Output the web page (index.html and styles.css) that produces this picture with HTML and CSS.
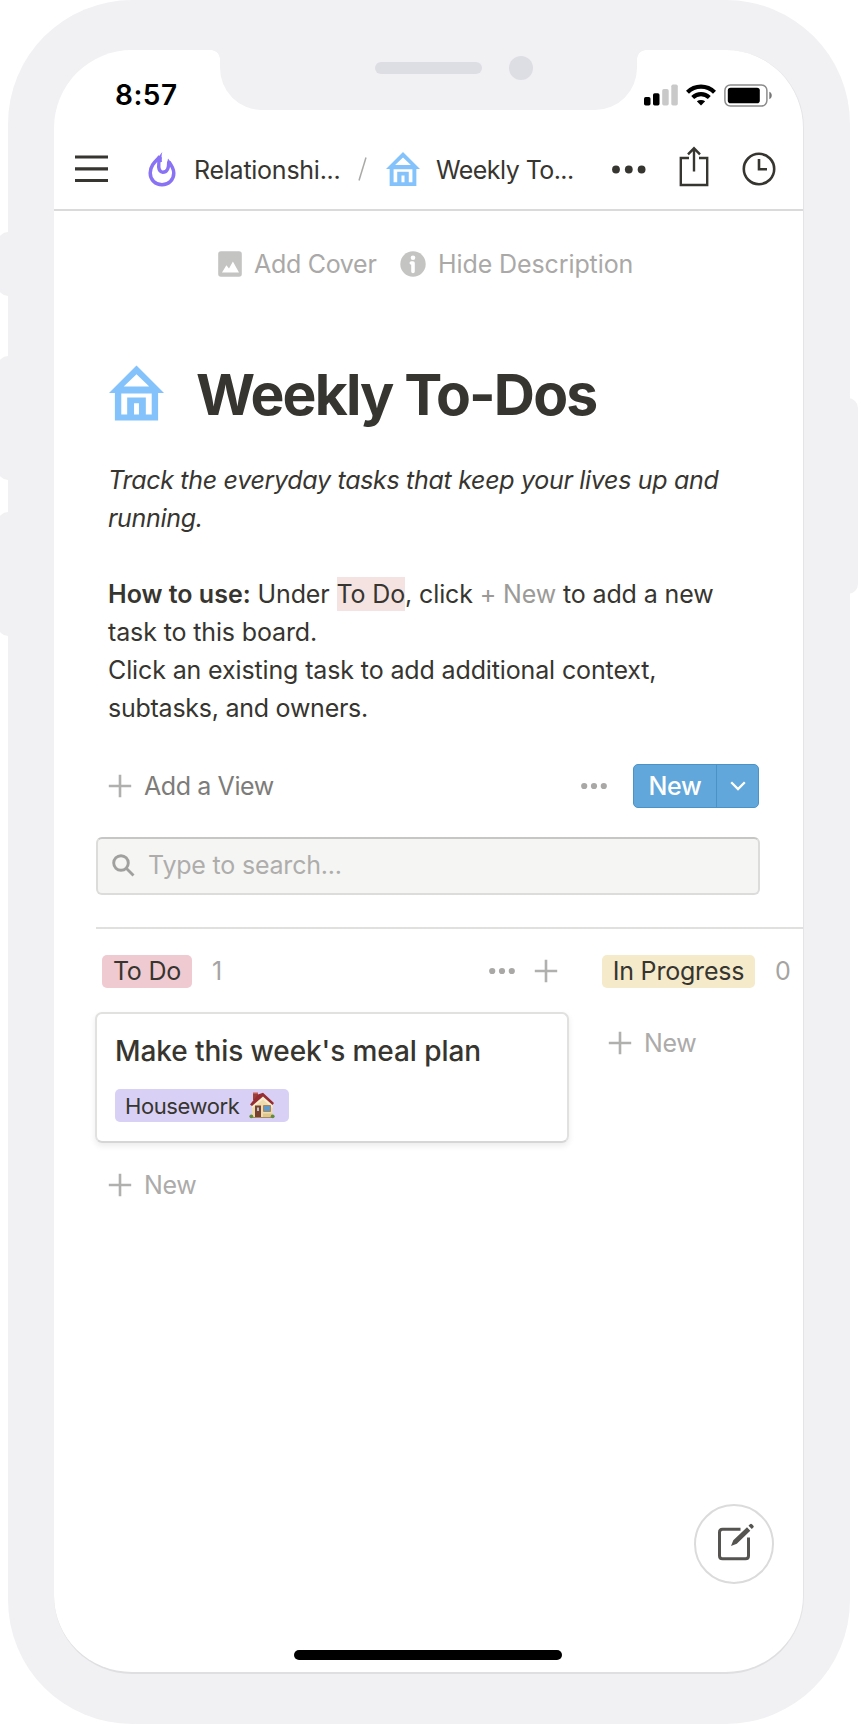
FILE: index.html
```html
<!DOCTYPE html>
<html lang="en">
<head>
<meta charset="utf-8">
<title>Weekly To-Dos</title>
<link rel="stylesheet" href="styles.css">
</head>
<body>
<svg class="defs" width="0" height="0" aria-hidden="true">
  <symbol id="house" viewBox="0 0 56 56">
    <path fill-rule="evenodd" d="M28 0 56 28H50V56H6V28H0ZM28 9 15 21.500H41ZM12.500 28.500V50H18.500V32.500H37.500V50H43.500V28.500ZM25.500 38.500V50H30.500V38.500Z"/>
  </symbol>
  <symbol id="plus" viewBox="0 0 24 24">
    <path d="M12 .8V23.200M.8 12H23.200" fill="none" stroke="currentColor" stroke-width="2.600"/>
  </symbol>
  <symbol id="dots" viewBox="0 0 26 8">
    <g fill="currentColor"><circle cx="3.200" cy="4" r="3.100"/><circle cx="13" cy="4" r="3.100"/><circle cx="22.800" cy="4" r="3.100"/></g>
  </symbol>
</svg>
<div class="phone">
  <i class="key key-mute"></i><i class="key key-up"></i><i class="key key-down"></i><i class="key key-power"></i>
  <main class="screen">
    <header class="status">
      <span class="time">8:57</span>
      <div class="signals">
        <svg width="34" height="22" viewBox="0 0 34 22"><rect x="0" y="13" width="6.500" height="8.500" rx="1.700"/><rect x="9" y="9.300" width="6.500" height="12.200" rx="1.700"/><g fill="#c9c9c9"><rect x="18.200" y="5" width="6.500" height="16.500" rx="1.700"/><rect x="27.300" y="0.500" width="6.500" height="21" rx="1.700"/></g></svg>
        <svg class="wifi" width="30" height="22" viewBox="0 0 30 22"><g fill="none" stroke="#000" stroke-width="4.200"><path d="M1.500 8.300C9 .7 21 .7 28.500 8.300"/><path d="M6.700 13.600C11.500 9 18.500 9 23.300 13.600"/></g><path d="M10.800 17.300C13.500 15.400 16.500 15.400 19.200 17.300L15 21.600Z"/></svg>
        <svg width="49" height="23" viewBox="0 0 49 23"><rect x=".9" y=".9" width="42" height="21.200" rx="5.500" fill="none" stroke="#8b8b8b" stroke-width="1.500"/><rect x="3.800" y="3.800" width="32" height="15.400" rx="2.800"/><path d="M45.300 7.800C48.600 9 48.600 14 45.300 15.200Z" fill="#777"/></svg>
      </div>
    </header>
    <nav class="nav">
      <svg class="menu" width="33" height="28" viewBox="0 0 33 28"><path d="M0 2H33M0 13.800H33M0 25.500H33" stroke="#373530" stroke-width="3.200"/></svg>
      <svg class="flame" width="28" height="35" viewBox="0 0 28 35"><g fill="none" stroke="#8a72f5" stroke-width="3.500"><path d="M12 4.500C8 8.800 2.200 13 2.200 21C2.200 28 7.500 32.700 14 32.700C20.500 32.700 25.800 28 25.800 21C25.800 16.500 23.500 13.300 21 10"/><path d="M12.300 5C9.800 12 9.800 20 14.800 20.200C19.800 20.200 20.800 16 20.800 9.500"/></g><path d="M14.300 0C13.200 3.500 13.500 6.500 14 10L8 9.500C9.500 6 12 3 14.300 0ZM20 6.500 23.500 11 21 13 19 12Z" fill="#8a72f5"/></svg>
      <span class="crumb crumb-parent">Relationshi...</span>
      <svg class="slash" width="9" height="24" viewBox="0 0 9 24"><path d="M8 .5 1 23.500" stroke="#aaa9a6" stroke-width="1.500"/></svg>
      <svg class="house" width="34" height="34"><use href="#house"/></svg>
      <span class="crumb crumb-page">Weekly To...</span>
      <svg class="more" width="34" height="9" viewBox="0 0 34 9"><g fill="#373530"><circle cx="4" cy="4.500" r="3.900"/><circle cx="16.800" cy="4.500" r="3.900"/><circle cx="29.600" cy="4.500" r="3.900"/></g></svg>
      <svg class="share" width="30" height="41" viewBox="0 0 30 41"><g fill="none" stroke="#373530" stroke-width="2.400"><path d="M10 12H1.800V39H28.200V12H20"/><path d="M15 25.500V2.200M9 8.300 15 2.300 21 8.300"/></g></svg>
      <svg class="clock" width="34" height="34" viewBox="0 0 34 34"><g fill="none" stroke="#373530" stroke-width="2.600"><circle cx="17" cy="17" r="15.200"/><path d="M17 7V17.300H25"/></g></svg>
    </nav>
    <div class="page-actions">
      <svg width="24" height="26" viewBox="0 0 24 26"><path fill="#c4c4c3" fill-rule="evenodd" d="M3 .3H21Q23.800 .3 23.800 3V23Q23.800 25.700 21 25.700H3Q.2 25.700 .2 23V3Q.2 .3 3 .3ZM4 21.500H21L14.900 10.500 11 17.500 8.400 14.200Z"/></svg>
      <span class="act-cover">Add Cover</span>
      <svg class="info" width="26" height="26" viewBox="0 0 26 26"><circle cx="13" cy="13" r="12.700" fill="#c4c4c3"/><circle cx="13" cy="6.700" r="2.300" fill="#fff"/><path d="M11.300 12H13V20.500" fill="none" stroke="#fff" stroke-width="3.600" stroke-linecap="round" stroke-linejoin="round"/></svg>
      <span class="act-desc">Hide Description</span>
    </div>
    <div class="title-row">
      <svg class="house" width="55" height="56"><use href="#house"/></svg>
      <h1>Weekly To-Dos</h1>
    </div>
    <section class="description">
      <p class="tagline"><em>Track the everyday tasks that keep your lives up and<br>running.</em></p>
      <p class="howto"><b>How to use:</b> Under <mark>To Do</mark>, click <span class="hint">+ New</span> to add a new<br>task to this board.<br>Click an existing task to add additional context,<br><span class="last-line">subtasks, and owners.</span></p>
    </section>
    <div class="view-bar">
      <svg class="plus" width="24" height="24"><use href="#plus"/></svg>
      <span class="add-view">Add a View</span>
      <svg class="dots" width="26" height="8"><use href="#dots"/></svg>
      <div class="new-button"><span class="new-label">New</span><span class="new-arrow"><svg width="16" height="10" viewBox="0 0 16 10"><path d="M1.200 1.200 8 8 14.800 1.200" fill="none" stroke="#fff" stroke-width="2.300"/></svg></span></div>
    </div>
    <div class="search">
      <svg width="23" height="23" viewBox="0 0 23 23"><g fill="none" stroke="#a0a09e" stroke-width="2.900"><circle cx="9" cy="9" r="7.300"/><path d="M14 14 21.500 21.500"/></g></svg>
      <span>Type to search...</span>
    </div>
    <div class="board">
      <section class="column">
        <div class="column-head">
          <span class="tag tag-todo">To Do</span><span class="count">1</span>
          <svg class="dots" width="26" height="8"><use href="#dots"/></svg>
          <svg class="plus" width="24" height="24"><use href="#plus"/></svg>
        </div>
        <article class="card">
          <h2>Make this week's meal plan</h2>
          <div class="tag-work"><span>Housework</span>
            <svg width="26" height="27" viewBox="0 0 26 27"><path d="M4 1H9V8H4Z" fill="#9d4038"/><path d="M3 13 14 3 23.500 12.500V25H3Z" fill="#efdcae"/><path d="M3 13 14 3.500 23.500 12.500V16L14 7.500 3 16Z" fill="#f8edcf"/><path d="M1 12.500 9 2.500 14 .8 25 11 23.500 13 14 4.500 3 14Z" fill="#962d32"/><path d="M4 .5H9V2H4Z" fill="#c45b4e"/><path d="M6 13.500H12V25H6Z" fill="#79412f"/><path d="M8 15.500H10V19H8Z" fill="#b5c6d2"/><path d="M14.500 13.500H21.500V19.500H14.500Z" fill="#5e99c9" stroke="#a9855c" stroke-width="1"/><path d="M14 21.500H23.500V25H14Z" fill="#dfc68d"/><path d="M3 25H23.500V26H3Z" fill="#a48962"/><circle cx="2.300" cy="24.300" r="1.900" fill="#608c3c"/><circle cx="23.700" cy="24.300" r="1.900" fill="#608c3c"/></svg>
          </div>
        </article>
        <div class="add-row"><svg class="plus" width="24" height="24"><use href="#plus"/></svg><span>New</span></div>
      </section>
      <section class="column column-progress">
        <div class="column-head"><span class="tag tag-progress">In Progress</span><span class="count">0</span></div>
        <div class="add-row"><svg class="plus" width="24" height="24"><use href="#plus"/></svg><span>New</span></div>
      </section>
    </div>
    <footer class="bottom">
      <div class="compose"><svg width="38" height="38" viewBox="0 0 38 38"><path d="M23.500 6.200H5.500Q2.500 6.200 2.500 9.200V32.800Q2.500 35.800 5.500 35.800H28.500Q31.500 35.800 31.500 32.800V14.500" fill="none" stroke="#555451" stroke-width="3"/><path d="M14 23 16.300 17.300 30 4.300 33.300 7.700 19.800 20.800ZM31.500 2.800 33 1.300Q34 .4 35 1.300L36.400 2.700Q37.200 3.600 36.300 4.500L34.800 6.100Z" fill="#555451"/></svg></div>
      <div class="home-indicator"></div>
    </footer>
  </main>
  <div class="notch"><i class="speaker"></i><i class="camera"></i></div>
</div>
</body>
</html>
```
FILE: styles.css
```css
* { box-sizing: border-box; }
body { margin: 0; background: #fff; color: #373530; font: 25px/38px Inter, "Liberation Sans", sans-serif; width: 858px; height: 1724px; overflow: hidden; }
h1, h2, p { margin: 0; }
svg { display: block; flex: none; }
.defs { position: absolute; }
.house { fill: #83c2fb; }
.phone { position: relative; width: 842px; height: 1724px; margin-left: 8px; padding: 50px 46px; background: #f1f1f4; border-radius: 124px; }
.screen { width: 750px; height: 1624px; background: #fff; border-radius: 78px; overflow: hidden; display: flex; flex-direction: column; border-right: 1px solid #e4e4e6; border-bottom: 2px solid #dfdfe1; white-space: nowrap; }

.key { position: absolute; left: -10px; width: 20px; background: #f1f1f4; border-radius: 10px; }
.key-mute { top: 232px; height: 64px; }
.key-up { top: 356px; height: 124px; }
.key-down { top: 512px; height: 124px; }
.key-power { left: auto; right: -8px; top: 398px; height: 196px; }
.notch { position: absolute; left: 212px; top: 50px; width: 417px; height: 60px; background: #f1f1f4; border-radius: 0 0 42px 42px; }
.notch::before, .notch::after { content: ""; position: absolute; top: 0; width: 9px; height: 9px; }
.notch::before { left: -9px; background: radial-gradient(circle at 0 100%, transparent 8.500px, #f1f1f4 9px); }
.notch::after { right: -9px; background: radial-gradient(circle at 100% 100%, transparent 8.500px, #f1f1f4 9px); }
.speaker { position: absolute; left: 155px; top: 12px; width: 107px; height: 12px; border-radius: 6px; background: #dddde4; }
.camera { position: absolute; left: 289px; top: 6px; width: 24px; height: 24px; border-radius: 50%; background: #dddde4; }

.status { height: 74px; padding: 16px 30px 0 61px; display: flex; align-items: center; justify-content: space-between; color: #000; }
.time { font-size: 28px; font-weight: 600; letter-spacing: .5px; }
.signals { display: flex; align-items: center; }
.wifi { margin: 0 8px 0 8px; }

.nav { height: 87px; padding: 5px 0 0 21px; display: flex; align-items: center; border-bottom: 2px solid #dadada; }
.flame { margin-left: 40px; }
.crumb { letter-spacing: -.25px; padding-top: 1px; }
.crumb-parent { margin-left: 18px; width: 164px; }
.nav .house { margin-left: 19px; }
.crumb-page { margin-left: 16px; width: 176px; letter-spacing: -.55px; }
.share { margin: -6px 0 0 33px; }
.clock { margin-left: 33px; }

.page-actions { height: 106px; padding-left: 164px; display: flex; align-items: center; color: #aaa9a7; letter-spacing: -.2px; }
.act-cover { margin-left: 12px; width: 146px; letter-spacing: -.3px; }
.act-desc { margin-left: 12px; letter-spacing: -.1px; }

.title-row { height: 144px; padding: 7px 0 0 55px; display: flex; align-items: center; }
.title-row .house { margin: 0 32px 0 0; }
h1 { font-size: 57px; line-height: 70px; font-weight: 700; letter-spacing: -1.850px; padding-top: 5px; }

.description { padding-left: 54px; height: 266px; }
.tagline { letter-spacing: -.3px; }
.howto { margin-top: 38px; letter-spacing: -.13px; }
.howto b { font-weight: 600; letter-spacing: 0; }
.last-line { letter-spacing: -.25px; }
mark { background: #f5e3e2; color: inherit; padding: 2px 0; }
.hint { color: #9b9a97; }

.view-bar { height: 88px; margin-top: 15px; padding: 0 44px 0 54px; display: flex; align-items: center; color: #7d7c79; }
.plus { color: #b0b0ae; }
.add-view { margin-left: 12px; letter-spacing: -.4px; }
.dots { margin-left: auto; color: #a9a8a6; }
.new-button { margin-left: 26px; width: 126px; height: 44px; display: flex; border: 1.500px solid #4b93c6; border-radius: 5px; background: #61a7dc; color: #fff; font-weight: 500; letter-spacing: -.3px; }
.new-label { width: 83px; display: grid; place-items: center; border-right: 1px solid #4b93c6; }
.new-arrow { flex: 1; display: grid; place-items: center; }

.search { margin: 7px 43px 0 42px; height: 58px; flex: none; padding: 0 0 2px 14px; display: flex; align-items: center; gap: 13px; background: #f5f5f4; border: 2px solid #dcdcdb; border-top-color: #c6c6c5; border-radius: 6px; color: #aeadab; letter-spacing: -.2px; }

.board { margin: 32px 0 0 41px; padding-top: 27px; display: flex; position: relative; }
.board::before { content: ""; position: absolute; left: 1px; right: 0; top: 0; height: 2px; background: #e0e0df; }
.column { width: 474px; flex: none; }
.column-progress { margin-left: 33px; width: 210px; }
.column-head { height: 34px; display: flex; align-items: center; padding: 0 11px 0 7px; }
.column-progress .column-head { padding: 0; }
.column-head .plus { margin-left: 19px; }
.tag { height: 33px; border-radius: 5px; line-height: 33px; text-align: center; letter-spacing: -.2px; }
.tag-todo { width: 90px; background: #f0cad1; }
.tag-progress { width: 153px; background: #f5ebcb; }
.count { margin-left: 20px; color: #a5a4a2; }
.card { margin-top: 24px; height: 131px; padding: 17px 18px; border: 2px solid #e1e1e0; border-bottom-color: #d6d6d6; border-radius: 7px; box-shadow: 0 3px 6px rgba(0,0,0,.08); }
h2 { font-size: 28px; line-height: 40px; font-weight: 500; letter-spacing: -.08px; }
.tag-work { width: 174px; height: 33px; margin-top: 18px; padding-left: 10px; display: flex; align-items: center; gap: 9px; background: #d9d0f5; border-radius: 5px; font-size: 22px; letter-spacing: -.4px; }
.add-row { height: 38px; margin-top: 23px; padding-left: 13px; display: flex; align-items: center; gap: 12px; color: #acabaa; letter-spacing: -.4px; }
.column-progress .add-row { margin-top: 36px; padding-left: 6px; }

.bottom { margin-top: auto; height: 168px; padding: 0 29px 12px 0; display: flex; flex-direction: column; align-items: flex-end; }
.compose { width: 80px; height: 80px; border: 2px solid #dbdbdb; border-radius: 50%; display: grid; place-items: center; padding: 0 0 4px 3px; }
.home-indicator { width: 268px; height: 10px; margin: auto 212px 0 0; border-radius: 5px; background: #000; }
```
